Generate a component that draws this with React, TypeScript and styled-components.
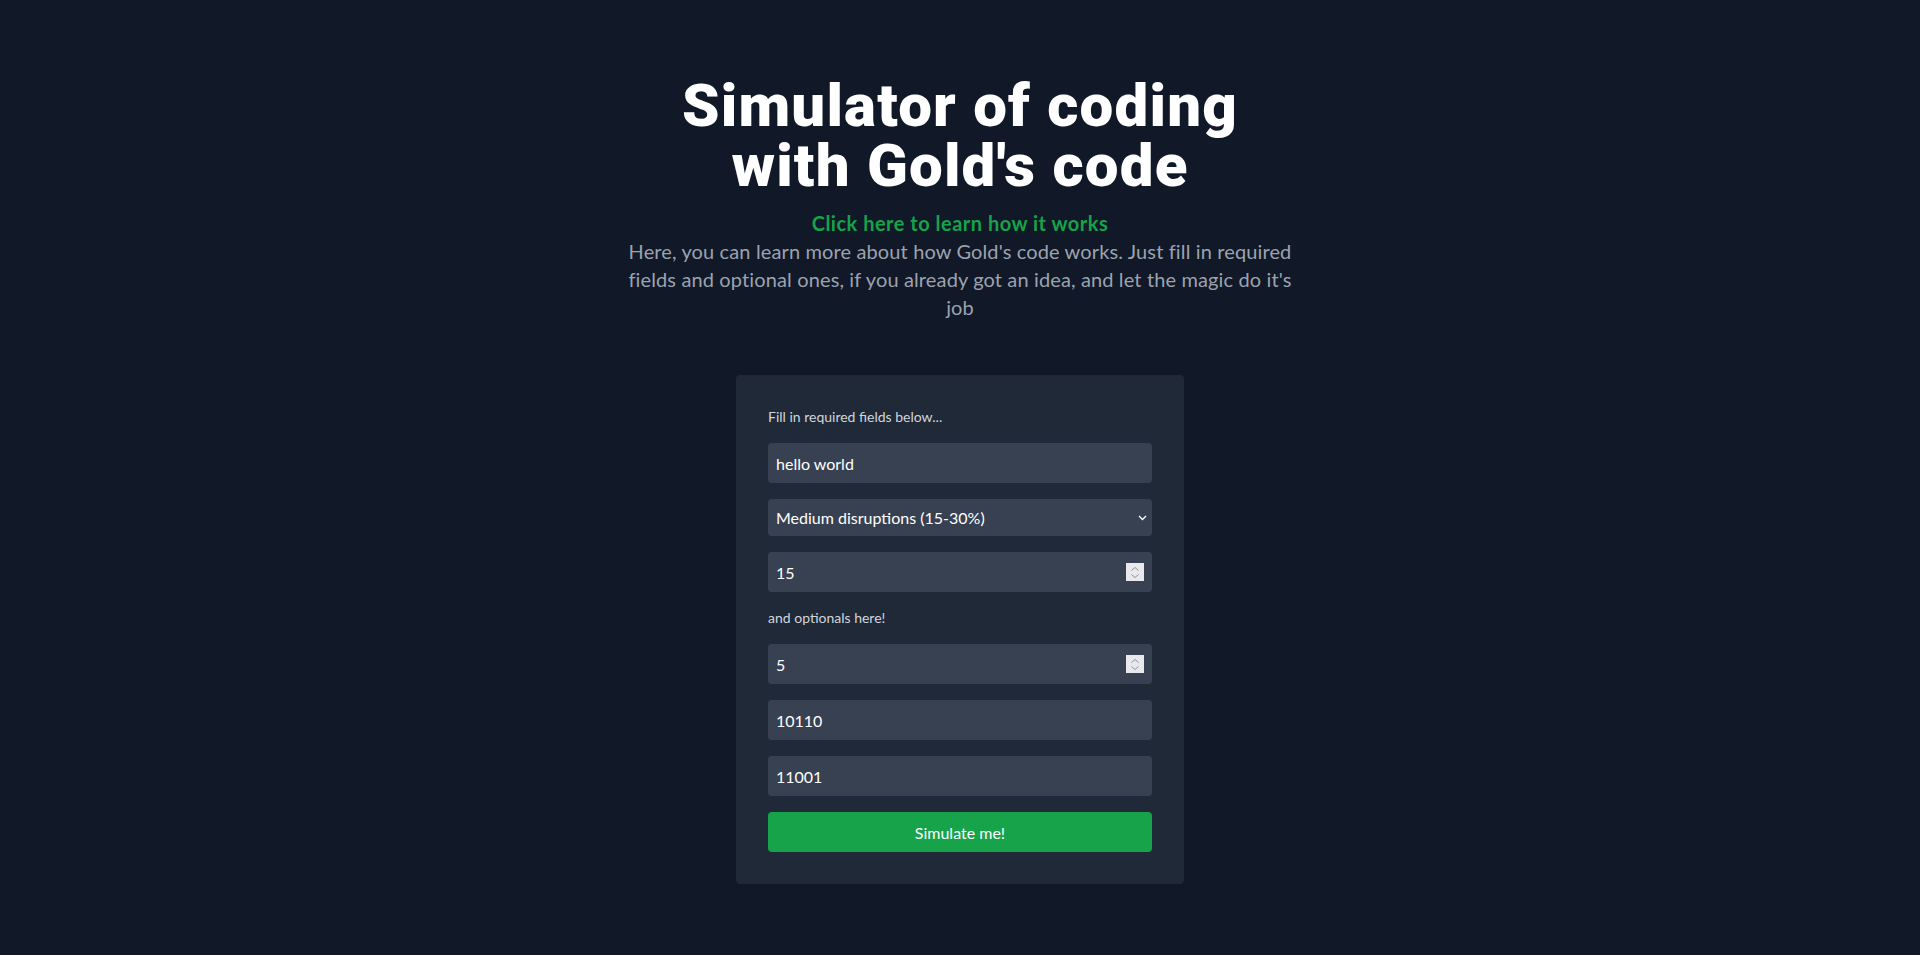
import React from "react";
import styled, { createGlobalStyle } from "styled-components";

const GlobalStyle = createGlobalStyle`
  html, body {
    margin: 0;
    padding: 0;
    background: #111827;
  }
  body {
    font-family: "Segoe UI", Lato, "Noto Sans", sans-serif;
    color: #ffffff;
  }
  * { box-sizing: border-box; }
`;

const Page = styled.main`
  min-height: 955px;
  display: flex;
  flex-direction: column;
  align-items: center;
  padding-top: 76px;
  padding-bottom: 40px;
`;

const Hero = styled.header`
  display: flex;
  flex-direction: column;
  align-items: center;
  text-align: center;
  max-width: 680px;
`;

const Title = styled.h1`
  margin: 0;
  font-family: "Segoe UI", Roboto, "Noto Sans", sans-serif;
  font-size: 60px;
  line-height: 60px;
  font-weight: 900;
  color: #ffffff;
  letter-spacing: 1.2px;
`;

const LearnLink = styled.a`
  margin-top: 13px;
  font-size: 20px;
  line-height: 28px;
  font-weight: 700;
  color: #16a34a;
  text-decoration: none;
  letter-spacing: 0.5px;
  cursor: pointer;
`;

const Lead = styled.p`
  margin: 0;
  font-size: 20px;
  line-height: 28px;
  color: #9ca3af;
  letter-spacing: 0.13px;
`;

const Card = styled.section`
  margin-top: 54px;
  width: 448px;
  padding: 32px;
  background: #1f2937;
  border-radius: 4px;
`;

const Form = styled.form`
  display: flex;
  flex-direction: column;
  gap: 16px;
`;

const Hint = styled.p`
  margin: 0;
  font-size: 14px;
  line-height: 20px;
  color: #d1d5db;
`;

const Field = styled.input<{ $h?: number }>`
  width: 100%;
  height: ${(p) => p.$h ?? 40}px;
  padding: 0 8px;
  border: none;
  border-radius: 4px;
  background: #374151;
  color: #ffffff;
  font-family: inherit;
  font-size: 16px;
  outline: none;
  -moz-appearance: textfield;
  &::-webkit-inner-spin-button,
  &::-webkit-outer-spin-button {
    -webkit-appearance: none;
    margin: 0;
  }
`;

const Control = styled.div`
  position: relative;
  width: 100%;
`;

const Select = styled.select`
  width: 100%;
  height: 37px;
  padding: 0 24px 0 8px;
  border: none;
  border-radius: 4px;
  background: #374151;
  color: #ffffff;
  font-family: inherit;
  font-size: 16px;
  appearance: none;
  -webkit-appearance: none;
  outline: none;
`;

const Chevron = styled.svg`
  position: absolute;
  right: 5px;
  top: 50%;
  width: 9px;
  height: 6px;
  margin-top: -3px;
  pointer-events: none;
`;

const Spinner = styled.span`
  position: absolute;
  right: 8px;
  top: 50%;
  margin-top: -9px;
  width: 18px;
  height: 18px;
  background: #e9e9ed;
  display: flex;
  flex-direction: column;
  align-items: center;
  justify-content: center;
  gap: 3px;
  pointer-events: none;
`;

const Arrow = styled.svg`
  width: 8px;
  height: 4px;
  display: block;
`;

const SubmitButton = styled.button`
  width: 100%;
  height: 40px;
  border: none;
  border-radius: 4px;
  background: #16a34a;
  color: #ffffff;
  font-family: inherit;
  font-size: 16px;
  cursor: pointer;
`;

const NumberField: React.FC<{ value: string }> = ({ value }) => (
  <Control>
    <Field type="number" defaultValue={value} />
    <Spinner>
      <Arrow viewBox="0 0 8 4">
        <path d="M0.5 3.5 L4 0.5 L7.5 3.5" fill="none" stroke="#8f8f9d" strokeWidth="1" />
      </Arrow>
      <Arrow viewBox="0 0 8 4">
        <path d="M0.5 0.5 L4 3.5 L7.5 0.5" fill="none" stroke="#8f8f9d" strokeWidth="1" />
      </Arrow>
    </Spinner>
  </Control>
);

export default function App() {
  return (
    <>
      <GlobalStyle />
      <Page>
        <Hero>
          <Title>
            Simulator of coding
            <br />
            with Gold's code
          </Title>
          <LearnLink>Click here to learn how it works</LearnLink>
          <Lead>
            Here, you can learn more about how Gold's code works. Just fill in required fields and
            optional ones, if you already got an idea, and let the magic do it's job
          </Lead>
        </Hero>
        <Card>
          <Form onSubmit={(e) => e.preventDefault()}>
            <Hint>Fill in required fields below...</Hint>
            <Field type="text" defaultValue="hello world" />
            <Control>
              <Select defaultValue="medium">
                <option value="low">Low disruptions (0-15%)</option>
                <option value="medium">Medium disruptions (15-30%)</option>
                <option value="high">High disruptions (30-50%)</option>
              </Select>
              <Chevron viewBox="0 0 9 6">
                <path d="M1 1 L4.5 4.5 L8 1" fill="none" stroke="#ffffff" strokeWidth="1.3" />
              </Chevron>
            </Control>
            <NumberField value="15" />
            <Hint>and optionals here!</Hint>
            <NumberField value="5" />
            <Field type="text" defaultValue="10110" />
            <Field type="text" defaultValue="11001" />
            <SubmitButton type="submit">Simulate me!</SubmitButton>
          </Form>
        </Card>
      </Page>
    </>
  );
}
